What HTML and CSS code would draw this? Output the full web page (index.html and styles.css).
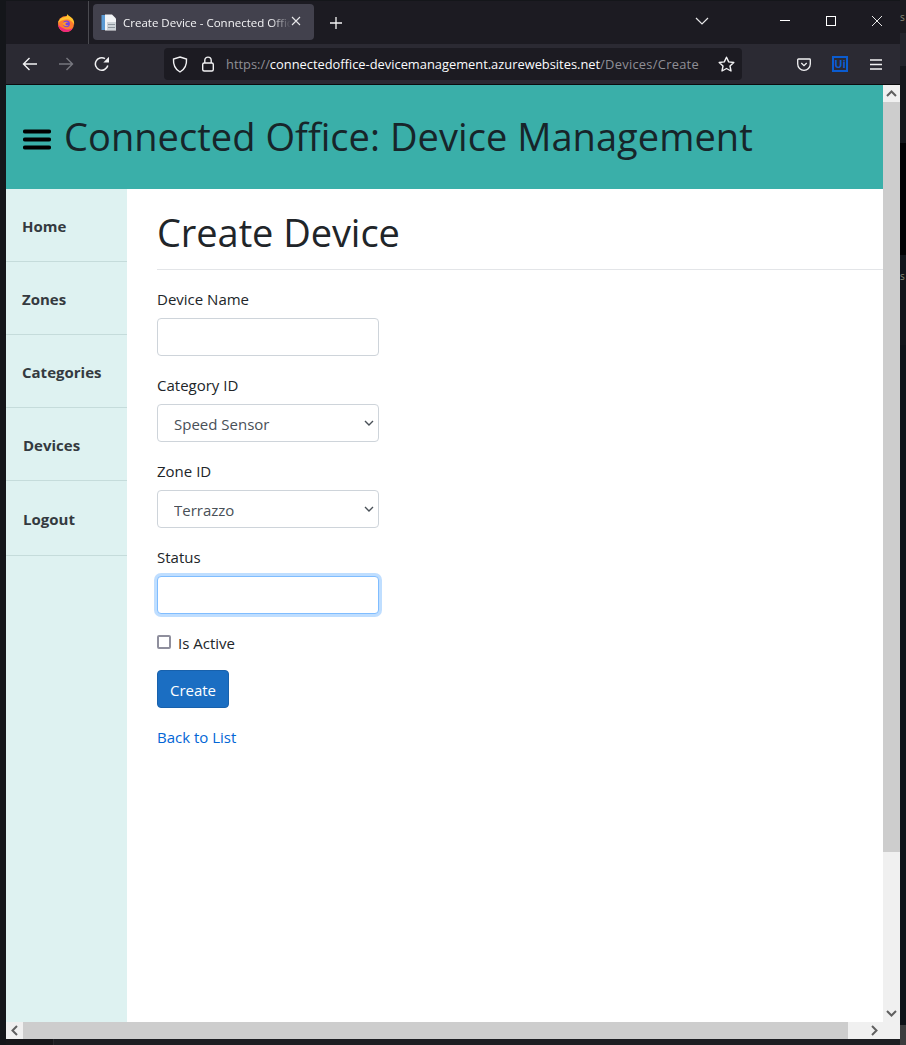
FILE: index.html
```html
<!DOCTYPE html>
<html lang="en">
<head>
<meta charset="utf-8">
<title>Create Device - Connected Office</title>
<link rel="stylesheet" href="styles.css">
</head>
<body>
<div class="shell">
<div class="window">
  <div class="tabstrip">
    <div class="ff-cell">
      <svg class="ff-logo" width="18" height="18" viewBox="0 0 18 18"><circle cx="9" cy="10" r="8" fill="#ff7a2f"/><path d="M1 9c1-4 4-6 8-6 .8-1 1.200-2 1.500-3 .4 1 1.500 2 2.500 2.500 3 1.700 4.400 4.500 4.200 8C15.500 7.500 13 5.500 10 5.500 6 5.500 3.500 7 1 9z" fill="#ffc22e"/><path d="M1 10.500c.4 4 3.700 7.500 8 7.500 3 0 5.500-1.500 7-4-2.500 1.500-5.500 2-8 1-2.500-.8-5.500-2.500-7-4.500z" fill="#f0267e"/><circle cx="9.500" cy="9.800" r="3.400" fill="#7542e5"/><path d="M5.500 9.500c1-1.800 4-2.500 6.500-1.200-2-.2-3.500.5-3.500 1.900 0 1.100 1.700 1.400 3 1-1.200 1.600-4.800 1.300-6-1.700z" fill="#ff9a2a"/></svg>
    </div>
    <div class="tab">
      <svg width="17" height="17" viewBox="0 0 17 17"><rect x="0.500" y="1" width="6" height="15" fill="#5b9bd5"/><path d="M4 0.500h7l4 4v12H4z" fill="#f2f4f6"/><rect x="6" y="8" width="9" height="8" fill="#cdd3d8"/><rect x="7" y="10" width="7" height="1" fill="#8c959c"/><rect x="7" y="13" width="7" height="1" fill="#8c959c"/></svg>
      <span class="tab-title">Create Device - Connected Office</span>
      <svg class="tab-close" width="10" height="10" viewBox="0 0 10 10"><path d="M1 1l8 8M9 1l-8 8" stroke="#e8e8ea" stroke-width="1.100" fill="none"/></svg>
    </div>
    <svg class="newtab" width="12" height="12" viewBox="0 0 12 12"><path d="M6 0v12M0 6h12" stroke="#f4f4f5" stroke-width="1.300" fill="none"/></svg>
    <div class="strip-spacer"></div>
    <svg class="listtabs" width="14" height="8" viewBox="0 0 14 8"><path d="M1 1l6 6 6-6" stroke="#e8e8ea" stroke-width="1.200" fill="none"/></svg>
    <div class="caption">
      <svg width="12" height="12" viewBox="0 0 12 12"><path d="M1 5.500h10" stroke="#fff" fill="none"/></svg>
      <svg width="12" height="12" viewBox="0 0 12 12"><rect x="1.500" y="1.500" width="9" height="9" stroke="#fff" fill="none"/></svg>
      <svg width="12" height="12" viewBox="0 0 12 12"><path d="M1 1l10 10M11 1l-10 10" stroke="#fff" stroke-width="0.900" fill="none"/></svg>
    </div>
  </div>
  <div class="navbar">
    <svg class="nav-ico back" width="16" height="14" viewBox="0 0 16 14"><path d="M15 7H1.500M7.500 1L1.500 7l6 6" stroke="#f2f2f4" stroke-width="1.400" fill="none"/></svg>
    <svg class="nav-ico fwd" width="16" height="14" viewBox="0 0 16 14"><path d="M1 7h13.500M8.500 1l6 6-6 6" stroke="#77777f" stroke-width="1.400" fill="none"/></svg>
    <svg class="nav-ico reload" width="16" height="16" viewBox="0 0 16 16"><path d="M13.800 9.500A6.300 6.300 0 1 1 11 2.600" stroke="#f2f2f4" stroke-width="1.500" fill="none"/><path d="M15 0.800V6.500H9.300z" fill="#f2f2f4"/></svg>
    <div class="urlbar">
      <svg class="shield" width="16" height="17" viewBox="0 0 16 17"><path d="M8 1l6.500 2c.4 6-1.800 10.500-6.500 13C3.300 13.500 1.100 9 1.500 3z" stroke="#f2f2f4" stroke-width="1.400" fill="none"/></svg>
      <svg class="lock" width="14" height="16" viewBox="0 0 14 16"><rect x="1.700" y="7" width="10.600" height="8" rx="1.500" stroke="#f2f2f4" stroke-width="1.400" fill="none"/><path d="M3.800 7V4.300a3.200 3.200 0 0 1 6.400 0V7" stroke="#f2f2f4" stroke-width="1.400" fill="none"/></svg>
      <span class="url"><span class="dim">https://</span>connectedoffice-devicemanagement.azurewebsites.net<span class="dim path">/Devices/Create</span></span>
      <svg class="star" width="17" height="16" viewBox="0 0 17 16"><path d="M8.500 1.200l2.200 4.700 5.100.6-3.800 3.500 1 5-4.500-2.500L4 15l1-5L1.200 6.500l5.100-.6z" stroke="#f2f2f4" stroke-width="1.400" stroke-linejoin="round" fill="none"/></svg>
    </div>
    <svg class="pocket" width="14" height="13" viewBox="0 0 14 13"><path d="M1.500 1h11a.8.8 0 0 1 .8.8V6a6.300 6.300 0 0 1-12.600 0V1.800A.8.8 0 0 1 1.500 1z" stroke="#f2f2f4" stroke-width="1.300" fill="none"/><path d="M4.300 5L7 7.600 9.700 5" stroke="#f2f2f4" stroke-width="1.300" fill="none"/></svg>
    <span class="ui-badge">Ui</span>
    <svg class="menu" width="13" height="11" viewBox="0 0 13 11"><path d="M0 1h12M0 5.500h12M0 10h12" stroke="#f2f2f4" stroke-width="1.300" fill="none"/></svg>
  </div>
  <div class="viewport">
    <div class="page">
      <header class="site-header">
        <svg class="burger" width="28" height="22" viewBox="0 0 28 22"><path d="M2 2.500h24M2 10.500h24M2 18.500h24" stroke="#000" stroke-width="4.200" stroke-linecap="round" fill="none"/></svg>
        <h2 class="site-title">Connected Office: Device Management</h2>
      </header>
      <div class="body-row">
        <nav class="sidebar">
          <a class="side-link">Home</a>
          <a class="side-link">Zones</a>
          <a class="side-link">Categories</a>
          <a class="side-link shifted">Devices</a>
          <a class="side-link shifted tall">Logout</a>
        </nav>
        <main class="main">
          <h1 class="page-title">Create Device</h1>
          <hr class="rule">
          <form class="form">
            <label class="field-label">Device Name</label>
            <input class="control" type="text">
            <label class="field-label">Category ID</label>
            <select class="control select"><option>Speed Sensor</option></select>
            <label class="field-label">Zone ID</label>
            <select class="control select"><option>Terrazzo</option></select>
            <label class="field-label">Status</label>
            <input class="control focused" type="text">
            <label class="check-row"><input class="check" type="checkbox"><span>Is Active</span></label>
            <button class="btn" type="button">Create</button>
          </form>
          <a class="back-link">Back to List</a>
        </main>
      </div>
    </div>
    <div class="vscroll">
      <div class="sb-btn"><svg width="11" height="7" viewBox="0 0 11 7"><path d="M1 6l4.500-4.500L10 6" stroke="#606060" stroke-width="2" fill="none"/></svg></div>
      <div class="v-thumb"></div>
      <div class="sb-track"></div>
      <div class="sb-btn"><svg width="11" height="7" viewBox="0 0 11 7"><path d="M1 1l4.500 4.500L10 1" stroke="#606060" stroke-width="2" fill="none"/></svg></div>
    </div>
    <div class="hscroll">
      <div class="sb-btn"><svg width="7" height="11" viewBox="0 0 7 11"><path d="M6 1L1.500 5.500 6 10" stroke="#606060" stroke-width="2" fill="none"/></svg></div>
      <div class="h-thumb"></div>
      <div class="sb-track"></div>
      <div class="sb-btn"><svg width="7" height="11" viewBox="0 0 7 11"><path d="M1 1l4.500 4.500L1 10" stroke="#606060" stroke-width="2" fill="none"/></svg></div>
    </div>
  </div>
</div>
<div class="below"><div class="below-a"></div><div class="below-b"></div></div>
</div>
<aside class="backdrop">
  <div class="bd-a"><span class="bd-letter">s</span></div>
  <div class="bd-b"></div>
  <div class="bd-c"></div>
  <div class="bd-d"></div>
  <div class="bd-e"><span class="bd-letter">s</span></div>
  <div class="bd-f"></div>
  <div class="bd-g"></div>
</aside>
</body>
</html>
```
FILE: styles.css
```css
* { box-sizing: border-box; }
html, body { margin: 0; height: 1045px; overflow: hidden; }
body {
  display: flex;
  padding-left: 6px;
  background: #14161a;
  font-family: "Open Sans", "Noto Sans", sans-serif;
  color: #212529;
}
.shell { width: 894px; flex: none; display: flex; flex-direction: column; padding-top: 1px; }
.window {
  width: 894px;
  height: 1038px;
  display: flex;
  flex-direction: column;
  flex: none;
}
.below { flex: 1; display: flex; }
.below-a { width: 48px; background: #17171a; border-right: 1px solid #2a2a2e; }
.below-b { flex: 1; background: #1d1e22; }
.tabstrip {
  height: 43px;
  background: #1c1b22;
  display: flex;
  align-items: center;
  flex: none;
}
.ff-cell {
  width: 83px;
  height: 43px;
  border-right: 1px solid #4a4a50;
  display: flex;
  align-items: center;
  padding-left: 51px;
  margin-right: 4px;
}
.tab {
  width: 221px;
  height: 36px;
  background: #42414d;
  border-radius: 4px;
  display: flex;
  align-items: center;
  padding-left: 8px;
  margin-top: -1px;
}
.tab-title {
  margin-left: 5px;
  width: 168px;
  overflow: hidden;
  white-space: nowrap;
  font: 11.5px "Open Sans", sans-serif;
  color: #f4f4f6;
  -webkit-mask-image: linear-gradient(90deg, #000 88%, transparent);
  mask-image: linear-gradient(90deg, #000 88%, transparent);
}
.tab-close { margin-top: -3px; }
.newtab { margin-left: 16px; }
.strip-spacer { flex: 1; }
.listtabs { margin-right: 70px; margin-top: -3px; }
.caption { display: flex; gap: 34px; padding-right: 17px; margin-top: -3px; }
.navbar {
  height: 41px;
  background: #2b2a33;
  border-bottom: 1px solid #0c0c0e;
  display: flex;
  align-items: center;
  flex: none;
}
.nav-ico.back { margin-left: 16px; }
.nav-ico.fwd { margin-left: 20px; }
.nav-ico.reload { margin-left: 20px; }
.urlbar {
  width: 578px;
  height: 32px;
  margin-left: 54px;
  background: #1c1b22;
  border-radius: 4px;
  display: flex;
  align-items: center;
  padding-left: 8px;
}
.lock { margin-left: 13px; }
.url {
  margin-left: 11px;
  font: 12.87px "Open Sans", sans-serif;
  color: #fbfbfe;
  white-space: nowrap;
  width: 491px;
}
.dim { color: #8f8f96; }
.path { letter-spacing: .28px; }
.star { margin-left: 1px; }
.pocket { margin-left: 55px; }
.ui-badge {
  margin-left: 21px;
  width: 16px;
  height: 16px;
  border: 2px solid #0b5cd0;
  color: #0b5cd0;
  font: 700 11px/12px "Open Sans", sans-serif;
  text-align: center;
}
.menu { margin-left: 22px; }
.viewport {
  flex: 1;
  display: grid;
  grid-template-columns: 877px 17px;
  grid-template-rows: 937px 17px;
  background: #fff;
}
.page { display: flex; flex-direction: column; overflow: hidden; }
.site-header {
  height: 104px;
  background: #3aafa9;
  display: flex;
  align-items: center;
  padding-left: 17px;
  flex: none;
}
.burger { flex: none; margin-top: 5px; }
.site-title {
  margin: -2px 0 0 13px;
  font-size: 38px;
  font-weight: 400;
  letter-spacing: .05px;
  color: #17252a;
  white-space: nowrap;
}
.body-row { flex: 1; display: flex; min-height: 0; }
.sidebar {
  width: 121px;
  flex: none;
  background: #def2f1;
  display: flex;
  flex-direction: column;
}
.side-link {
  height: 73px;
  border-bottom: 1px solid #c5dcdb;
  display: flex;
  align-items: center;
  padding: 2px 0 0 16px;
  font-size: 15px;
  font-weight: 700;
  color: #343a40;
}
.side-link.shifted { padding-left: 17px; }
.side-link.tall { height: 75px; }
.main { flex: 1; padding-left: 30px; min-width: 0; }
.page-title {
  margin: 15px 0 0;
  font-size: 38px;
  letter-spacing: -.07px;
  line-height: 56px;
  font-weight: 400;
  color: #212529;
}
.rule { margin: 9px 0 0; border: 0; border-top: 1px solid #e3e5e8; }
.form { display: flex; flex-direction: column; align-items: flex-start; padding-top: 17px; }
.field-label { font-size: 15px; line-height: 24px; height: 24px; margin-bottom: 7px; }
.control {
  width: 222px;
  height: 38px;
  margin: 0 0 17px;
  padding: 0 12px;
  border: 1px solid #ced4da;
  border-radius: 4px;
  background-color: #fff;
  font: 15px "Open Sans", sans-serif;
  color: #495057;
  outline: none;
  display: block;
}
.select {
  appearance: none;
  -webkit-appearance: none;
  padding: 2px 0 0 16px;
  background-image: url("data:image/svg+xml,%3Csvg xmlns='http://www.w3.org/2000/svg' width='10' height='6' viewBox='0 0 10 6'%3E%3Cpath d='M1 1l4 4 4-4' stroke='%23495057' stroke-width='1.400' fill='none'/%3E%3C/svg%3E");
  background-repeat: no-repeat;
  background-position: right 4px center;
}
.focused {
  border-color: #80bdff;
  box-shadow: 0 0 0 3px rgba(0, 123, 255, .25);
}
.check-row {
  display: flex;
  align-items: center;
  font-size: 15px;
  line-height: 24px;
  height: 24px;
  margin-bottom: 15px;
}
.check {
  appearance: none;
  -webkit-appearance: none;
  width: 14px;
  height: 14px;
  margin: -2px 7px 0 0;
  border: 2px solid #8f8f9d;
  border-radius: 2px;
  background: #fff;
}
.btn {
  width: 72px;
  height: 38px;
  background: #1b6ec2;
  border: 1px solid #1861ac;
  border-radius: 4px;
  color: #fff;
  font: 15px "Open Sans", sans-serif;
  padding: 2px 0 0;
}
.back-link {
  display: block;
  margin-top: 17px;
  font-size: 15px;
  line-height: 24px;
  color: #0366d6;
}
.vscroll {
  display: flex;
  flex-direction: column;
  background: #f0f0f0;
  grid-row: 1;
  grid-column: 2;
}
.hscroll {
  display: flex;
  background: #f0f0f0;
  grid-row: 2;
  grid-column: 1 / 3;
  padding-right: 17px;
}
.sb-btn {
  width: 17px;
  height: 17px;
  flex: none;
  display: flex;
  align-items: center;
  justify-content: center;
}
.sb-track { flex: 1; }
.v-thumb { height: 750px; background: #cdcdcd; }
.h-thumb { width: 825px; background: #cdcdcd; }
.backdrop {
  width: 6px;
  flex: none;
  height: 1045px;
  display: flex;
  flex-direction: column;
  overflow: hidden;
  font: 10px "Open Sans", sans-serif;
  color: #8a8a78;
}
.bd-letter { display: block; line-height: 12px; }
.bd-a { height: 33px; background: #1b1b20; padding-top: 11px; }
.bd-b { height: 33px; background: #23242b; }
.bd-c { height: 77px; background: #15171c; }
.bd-d { height: 112px; background: #020204; }
.bd-e { height: 90px; background: #12151b; padding-top: 15px; }
.bd-f { flex: 1; background: #0e1218; }
.bd-g { height: 20px; background: #3c3c3e; }
```
